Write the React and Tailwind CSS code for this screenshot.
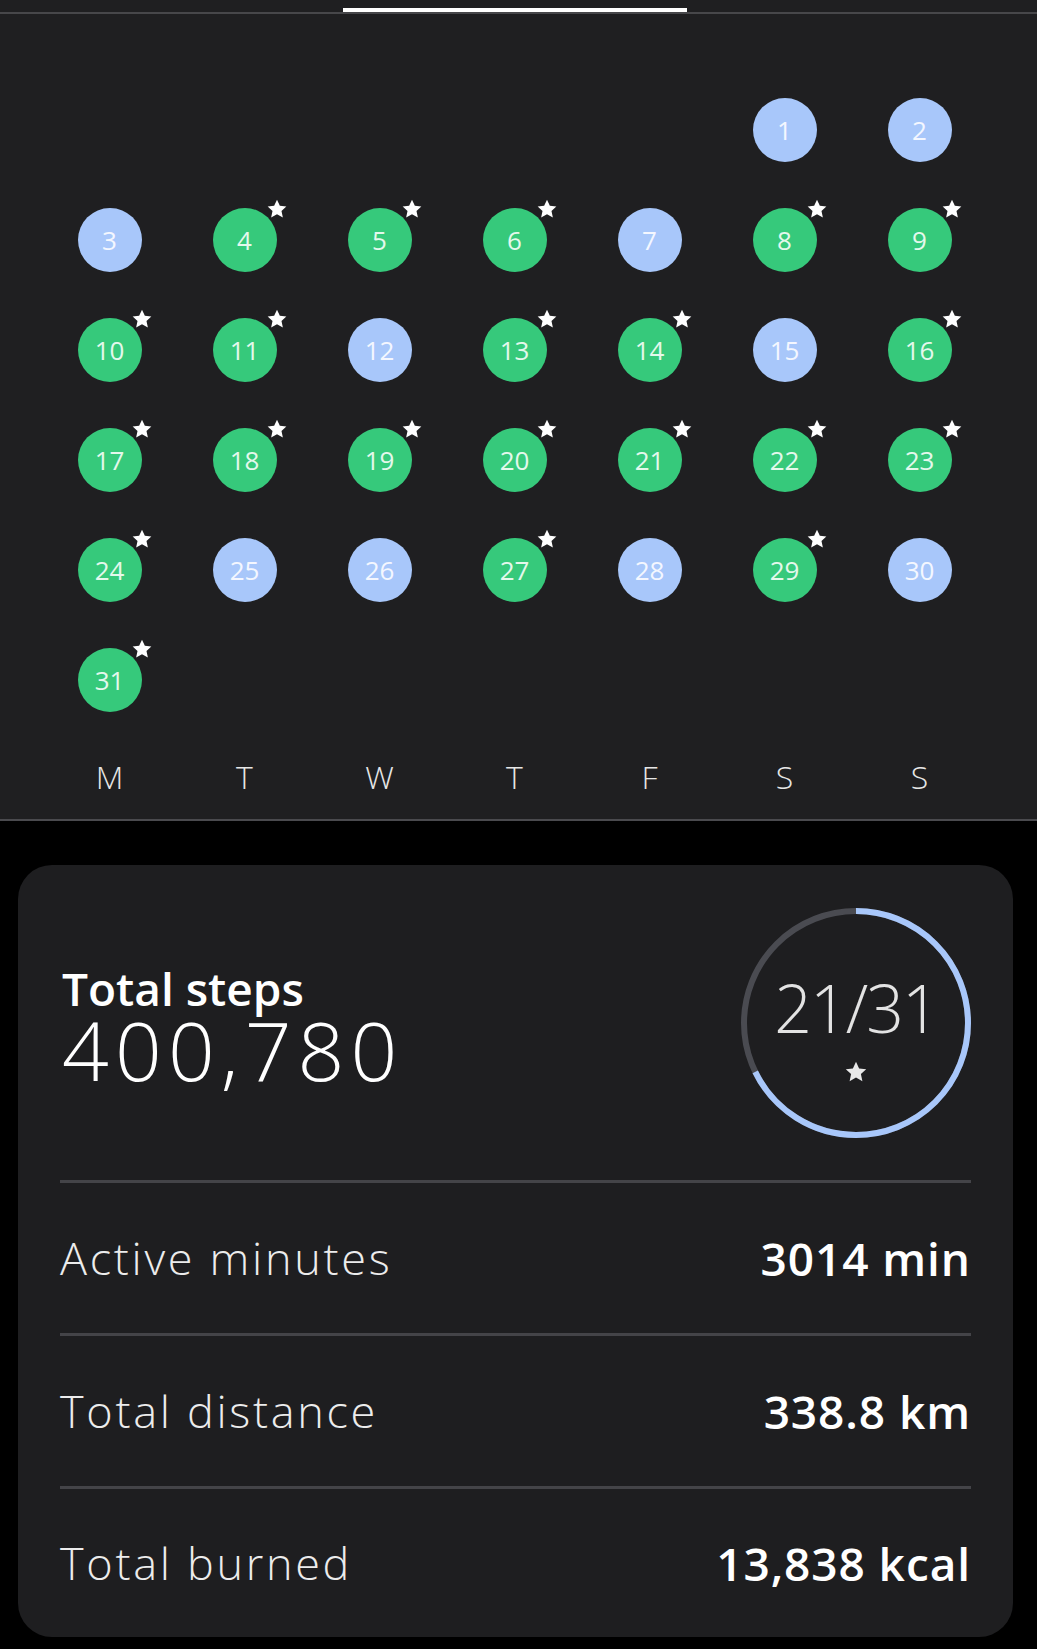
import React from 'react';

const GREEN = new Set([4, 5, 6, 8, 9, 10, 11, 13, 14, 16, 17, 18, 19, 20, 21, 22, 23, 24, 27, 29, 31]);
const WEEKDAYS = ['M', 'T', 'W', 'T', 'F', 'S', 'S'];
const FONT = { fontFamily: '"Open Sans", Lato, sans-serif' };

function Star({ className }) {
  return (
    <svg viewBox="0 0 24 24" className={className} fill="currentColor">
      <path d="M12 1.8l3.1 6.6 7.1.8-5.3 4.9 1.5 7.1L12 17.6l-6.4 3.6 1.5-7.1L1.8 9.2l7.1-.8z" />
    </svg>
  );
}

function Day({ n }) {
  const done = GREEN.has(n);
  return (
    <div className="flex justify-center">
      <div
        className={
          'relative w-16 h-16 rounded-full flex items-center justify-center text-[26px] ' +
          (done ? 'bg-[#36c97b] text-[#e4f8ec]' : 'bg-[#a8c7fa] text-[#f4f7ff]')
        }
      >
        {n}
        {done && <Star className="absolute left-[53px] top-[-10px] w-[22px] h-[22px] text-white" />}
      </div>
    </div>
  );
}

function Ring() {
  const r = 112;
  const c = 2 * Math.PI * r;
  const done = c * (21 / 31);
  return (
    <div className="relative w-[230px] h-[230px]">
      <svg viewBox="0 0 230 230" className="w-full h-full -rotate-90">
        <circle cx="115" cy="115" r={r} fill="none" stroke="#4a4b51" strokeWidth="6" />
        <circle
          cx="115"
          cy="115"
          r={r}
          fill="none"
          stroke="#a8c7fa"
          strokeWidth="6"
          strokeDasharray={`${done} ${c}`}
        />
      </svg>
      <div className="absolute inset-0 flex flex-col items-center justify-center">
        <div className="flex flex-col items-center mt-[13px]">
          <span className="text-[66px] font-light leading-none tracking-[-0.03em] text-[#e3e3e3]">21/31</span>
          <Star className="w-[24px] h-[24px] text-[#e8e8e8] mt-[20px]" />
        </div>
      </div>
    </div>
  );
}

function StatRow({ label, value, last }) {
  return (
    <div className={'flex items-center justify-between border-t-[3px] border-[#444448] ' + (last ? 'h-[151px]' : 'h-[153px]')}>
      <span className="text-[45px] font-light tracking-[0.06em] text-[#ececec]">{label}</span>
      <span className="text-[46px] font-semibold tracking-[0.02em] text-white">{value}</span>
    </div>
  );
}

export default function App() {
  const cells = [];
  for (let i = 0; i < 5; i++) cells.push(<div key={'e' + i} />);
  for (let d = 1; d <= 31; d++) cells.push(<Day key={d} n={d} />);

  return (
    <div className="min-h-screen bg-black text-white pb-[11px]" style={FONT}>
      {/* calendar */}
      <div className="bg-[#1f1f21] border-b-2 border-[#4a4a4e]">
        <div className="pt-[8px]">
          <div className="ml-[343px] w-[344px] h-[4px] bg-white" />
          <div className="h-[2px] bg-[#47474a]" />
        </div>

        <div className="ml-[42px] mt-[84px] grid grid-cols-[repeat(7,135px)] gap-y-[46px]">
          {cells}
        </div>

        <div className="ml-[42px] mt-[45px] pb-[22px] grid grid-cols-[repeat(7,135px)]">
          {WEEKDAYS.map((w, i) => (
            <div key={i} className="h-[40px] flex items-center justify-center text-[32px] font-light text-[#e6e6e6]">
              {w}
            </div>
          ))}
        </div>
      </div>

      {/* summary card */}
      <div className="ml-[18px] mt-[44px] w-[995px] bg-[#1e1e20] rounded-[34px] px-[42px]">
        <div className="h-[315px] flex items-center justify-between">
          <div className="flex flex-col pl-[2px] pt-[11px]">
            <span className="text-[46px] font-semibold leading-[41px] text-white">Total steps</span>
            <span className="text-[82px] font-light leading-[80px] tracking-[0.075em] text-white">400,780</span>
          </div>
          <Ring />
        </div>
        <StatRow label="Active minutes" value="3014 min" />
        <StatRow label="Total distance" value="338.8 km" />
        <StatRow label="Total burned" value="13,838 kcal" last />
      </div>
    </div>
  );
}
